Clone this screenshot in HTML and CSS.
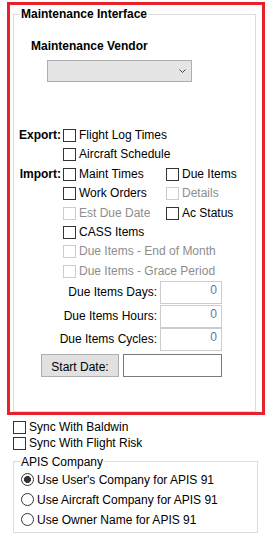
FILE: index.html
```html
<!DOCTYPE html>
<html lang="en">
<head>
  <meta charset="UTF-8" />
  <meta name="viewport" content="width=device-width, initial-scale=1.0"/>
  <title>Maintenance Interface</title>
  <link rel="stylesheet" href="styles.css">
</head>
<body>
  <!-- maintenance interface, highlighted -->
  <div class="frame">
    <fieldset class="group main">
      <legend>Maintenance Interface</legend>
      <div class="vendor-title">Maintenance Vendor</div>
      <div class="select">
        <svg width="7" height="4" viewBox="0 0 7 4"><polyline points="0.5,0.5 3.5,3.5 6.5,0.5" fill="none" stroke="#444" stroke-width="1"/></svg>
      </div>

      <div class="checks">
        <div class="row">
          <span class="lbl">Export:</span>
          <span class="chk"><span class="box"></span>Flight Log Times</span>
        </div>
        <div class="row">
          <span class="lbl"></span>
          <span class="chk"><span class="box"></span>Aircraft Schedule</span>
        </div>
      </div>

      <div class="checks import">
        <div class="row">
          <span class="lbl">Import:</span>
          <span class="chk col1"><span class="box"></span>Maint Times</span>
          <span class="chk"><span class="box"></span>Due Items</span>
        </div>
        <div class="row">
          <span class="lbl"></span>
          <span class="chk col1"><span class="box"></span>Work Orders</span>
          <span class="chk off"><span class="box"></span>Details</span>
        </div>
        <div class="row">
          <span class="lbl"></span>
          <span class="chk col1 off"><span class="box"></span>Est Due Date</span>
          <span class="chk"><span class="box"></span>Ac Status</span>
        </div>
        <div class="row">
          <span class="lbl"></span>
          <span class="chk"><span class="box"></span>CASS Items</span>
        </div>
        <div class="row">
          <span class="lbl"></span>
          <span class="chk off"><span class="box"></span>Due Items - End of Month</span>
        </div>
        <div class="row">
          <span class="lbl"></span>
          <span class="chk off"><span class="box"></span>Due Items - Grace Period</span>
        </div>
      </div>

      <div class="fields">
        <div class="field"><span class="field-lbl">Due Items Days:</span><span class="num">0</span></div>
        <div class="field"><span class="field-lbl">Due Items Hours:</span><span class="num">0</span></div>
        <div class="field"><span class="field-lbl">Due Items Cycles:</span><span class="num">0</span></div>
      </div>

      <div class="start-row">
        <span class="btn">Start Date:</span>
        <span class="textbox"></span>
      </div>
    </fieldset>
  </div>

  <!-- below the frame -->
  <div class="below">
    <div class="sync"><span class="box"></span>Sync With Baldwin</div>
    <div class="sync"><span class="box"></span>Sync With Flight Risk</div>
  </div>

  <fieldset class="group apis">
    <legend>APIS Company</legend>
    <div class="radio-row"><span class="radio on"></span>Use User's Company for APIS 91</div>
    <div class="radio-row"><span class="radio"></span>Use Aircraft Company for APIS 91</div>
    <div class="radio-row"><span class="radio"></span>Use Owner Name for APIS 91</div>
  </fieldset>
</body>
</html>
```

FILE: styles.css
```css
* {
  margin: 0;
  padding: 0;
  box-sizing: border-box;
}

html, body {
  width: 100%;
  height: 100%;
  background: #fff;
  overflow: hidden;
}

body {
  font-family: 'Liberation Sans', Arial, sans-serif;
  font-size: 12px;
  line-height: 16px;
  color: #000;
}

.frame {
  margin: 2px 0 0 7px;
  width: 258px;
  border: 3px solid #e8222a;
}

.group {
  border: 1px solid #dcdcdc;
  min-width: 0;
}

.group legend {
  margin-left: 6px;
  padding: 0 1px;
  line-height: 16px;
}

.main {
  margin: 1px 6px 0 3px;
  padding: 0 0 34px 0;
}

.main legend {
  font-weight: bold;
}

.vendor-title {
  margin: 16px 0 0 17px;
  font-weight: bold;
}

.select {
  margin: 6px 0 0 33px;
  width: 145px;
  height: 22px;
  background: #e5e5e5;
  border: 1px solid #adadad;
  display: flex;
  justify-content: flex-end;
  align-items: center;
  padding-right: 5px;
}

.select svg {
  display: block;
}

.checks {
  margin-top: 44px;
}

.checks.import {
  margin-top: 1px;
}

.row {
  display: flex;
  align-items: center;
  height: 19px;
  line-height: 19px;
}

.import .row {
  height: 19.33px;
}

.lbl {
  width: 49px;
  padding-right: 2px;
  text-align: right;
  font-weight: bold;
  flex-shrink: 0;
}

.chk {
  display: flex;
  align-items: center;
  white-space: nowrap;
}

.chk.col1 {
  width: 103px;
}

.box {
  display: inline-block;
  width: 13px;
  height: 13px;
  border: 1px solid #333;
  background: #fff;
  margin-right: 3px;
  flex-shrink: 0;
}

.chk.off {
  color: #8d8d8d;
}

.chk.off .box {
  border-color: #cccccc;
}

.field {
  display: flex;
  height: 23px;
}

.field:first-child {
  height: 24px;
}

.field-lbl {
  width: 143px;
  text-align: right;
  padding-top: 1px;
  line-height: 21px;
}

.num {
  margin-left: 3px;
  width: 62px;
  height: 23px;
  border: 1px solid #cccccc;
  text-align: right;
  padding-right: 4px;
  line-height: 17px;
  color: #5f75aa;
}

.start-row {
  display: flex;
  margin-top: 3px;
  height: 23px;
}

.btn {
  margin-left: 27px;
  width: 78px;
  height: 23px;
  background: #e1e1e1;
  border: 1px solid #adadad;
  text-align: center;
  padding-top: 2px;
  line-height: 20px;
}

.textbox {
  margin-left: 4px;
  width: 99px;
  height: 23px;
  border: 1px solid #7a7a7a;
  background: #fff;
}

.below {
  margin-top: 4px;
  padding-left: 13px;
}

.sync {
  display: flex;
  align-items: flex-start;
  height: 16px;
}

.sync .box {
  margin-top: 2px;
}

.apis {
  margin: 3px 0 0 13px;
  width: 245px;
  padding: 0 0 2px 0;
}

.radio-row {
  display: flex;
  align-items: center;
  height: 20px;
  line-height: 20px;
}

.radio {
  width: 13px;
  height: 13px;
  margin: 0 3px 0 7px;
  border: 1px solid #333;
  border-radius: 50%;
  background: #fff;
  flex-shrink: 0;
}

.radio.on {
  background: radial-gradient(circle, #333 0, #333 3.2px, #fff 3.8px);
}
```
